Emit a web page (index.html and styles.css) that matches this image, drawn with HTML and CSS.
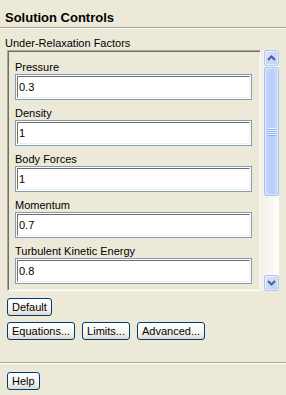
FILE: index.html
```html
<!DOCTYPE html>
<html lang="en">
<head>
    <meta charset="UTF-8">
    <meta name="viewport" content="width=device-width, initial-scale=1.0">
    <title>Solution Controls</title>
    <link rel="stylesheet" href="styles.css">
</head>
<body>
    <div class="panel">
        <div class="title">Solution Controls</div>
        <div class="section-label">Under-Relaxation Factors</div>
        <div class="pane">
            <div class="fields">
                <div class="field">
                    <label>Pressure</label>
                    <div class="entry"><input type="text" value="0.3"></div>
                </div>
                <div class="field">
                    <label>Density</label>
                    <div class="entry"><input type="text" value="1"></div>
                </div>
                <div class="field">
                    <label>Body Forces</label>
                    <div class="entry"><input type="text" value="1"></div>
                </div>
                <div class="field">
                    <label>Momentum</label>
                    <div class="entry"><input type="text" value="0.7"></div>
                </div>
                <div class="field">
                    <label>Turbulent Kinetic Energy</label>
                    <div class="entry"><input type="text" value="0.8"></div>
                </div>
            </div>
            <div class="scrollbar">
                <div class="sb-btn">
                    <svg width="9" height="6" viewBox="0 0 9 6"><path d="M1 5 L4.5 1.5 L8 5" fill="none" stroke="#4D6185" stroke-width="2"/></svg>
                </div>
                <div class="sb-thumb"><span class="grip"></span></div>
                <div class="sb-track"></div>
                <div class="sb-btn">
                    <svg width="9" height="6" viewBox="0 0 9 6"><path d="M1 1 L4.5 4.5 L8 1" fill="none" stroke="#4D6185" stroke-width="2"/></svg>
                </div>
            </div>
        </div>
        <div class="actions first">
            <button>Default</button>
        </div>
        <div class="actions">
            <button>Equations...</button>
            <button>Limits...</button>
            <button>Advanced...</button>
        </div>
        <div class="footer">
            <button>Help</button>
        </div>
    </div>
</body>
</html>
```

FILE: styles.css
```css
body {
    margin: 0;
    padding: 0;
    background-color: #ECE9D8;
    font-family: "Liberation Sans", Arial, sans-serif;
    font-size: 11px;
    color: #000;
}

.panel {
    height: 395px;
}

.title {
    height: 17px;
    padding: 10px 5px 0;
    font-size: 13px;
    font-weight: bold;
    line-height: 16px;
    border-bottom: 1px solid #ACA899;
    box-shadow: 0 1px 0 #fff;
}

.section-label {
    margin-top: 8px;
    padding-left: 5px;
    line-height: 14px;
}

.pane {
    display: flex;
    margin-left: 7px;
    height: 241px;
}

.fields {
    box-sizing: border-box;
    width: 254px;
    height: 241px;
    padding: 3px 8px 0 7px;
    overflow: hidden;
    border: 1px solid;
    border-color: #ACA899 #fff #fff #ACA899;
    box-shadow: inset 1px 1px 0 #716F64, inset -1px -1px 0 #F1EFE2;
}

.field label {
    display: block;
    margin-top: 6px;
    line-height: 14px;
}

.entry {
    box-sizing: border-box;
    height: 26px;
    padding: 1px;
    background-color: #fff;
    border: 1px solid #7F9DB9;
}

.entry input {
    display: block;
    box-sizing: border-box;
    width: 100%;
    height: 22px;
    margin: 0;
    padding: 0 1px;
    font-family: inherit;
    font-size: 11px;
    line-height: 20px;
    color: #000;
    background: #fff;
    border: 1px solid;
    border-color: #716F64 #F1EFE2 #F1EFE2 #716F64;
    outline: none;
}

.scrollbar {
    display: flex;
    flex-direction: column;
    width: 17px;
    margin-left: 1px;
    background: linear-gradient(to right, #F3F1EC, #FEFEFB);
}

.sb-btn {
    box-sizing: border-box;
    display: flex;
    align-items: center;
    justify-content: center;
    width: 15px;
    height: 16px;
    margin-left: 2px;
    background: linear-gradient(to bottom right, #D7E3FE, #BCD0FA);
    border: 1px solid #B3C7F3;
    border-radius: 2px;
    box-shadow: inset 0 0 0 1px rgba(255, 255, 255, 0.5);
}

.sb-thumb {
    box-sizing: border-box;
    display: flex;
    align-items: center;
    justify-content: center;
    width: 15px;
    height: 129px;
    margin: 1px 0 0 2px;
    background: linear-gradient(to right, #C6D7FD, #B9CDFA 60%, #C9D9FD);
    border: 1px solid #A9C0F2;
    border-radius: 2px;
    box-shadow: inset 0 0 0 1px rgba(255, 255, 255, 0.45);
}

.grip {
    display: block;
    width: 8px;
    height: 8px;
    background: repeating-linear-gradient(to bottom, #EEF4FE 0, #EEF4FE 1px, #8CB0F8 1px, #8CB0F8 2px);
}

.sb-track {
    flex: 1;
}

.actions {
    display: flex;
    gap: 7px;
    margin: 6px 0 0 7px;
}

.actions.first {
    margin-top: 7px;
}

button {
    box-sizing: border-box;
    height: 18px;
    margin: 0;
    padding: 0 4px;
    font-family: inherit;
    font-size: 11px;
    line-height: 16px;
    color: #000;
    background: linear-gradient(to bottom, #fff 0%, #F5F4EF 60%, #DEDBCE 100%);
    border: 1px solid #003C74;
    border-radius: 3px;
    cursor: pointer;
}

.footer {
    margin-top: 22px;
    padding: 9px 0 0 7px;
    border-top: 1px solid #ACA899;
    box-shadow: inset 0 1px 0 #fff;
}
```
